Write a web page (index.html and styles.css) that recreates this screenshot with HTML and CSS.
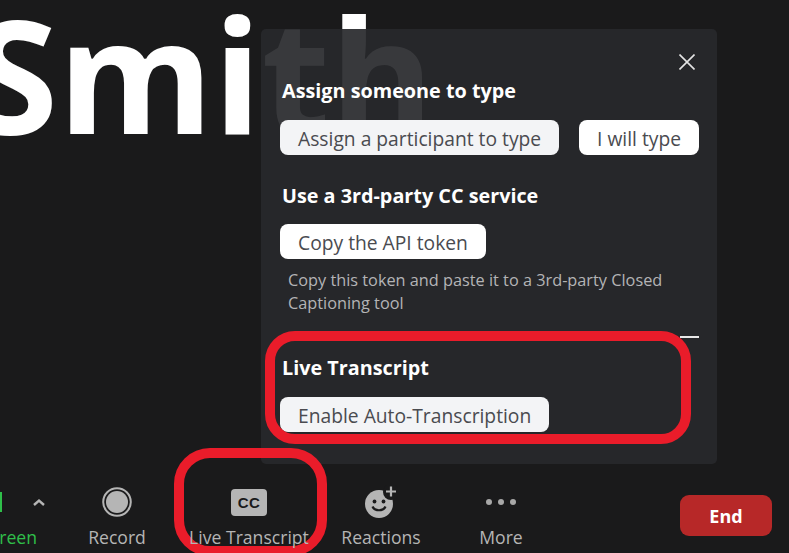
FILE: index.html

```html
<!DOCTYPE html>
<html lang="en">
<head>
    <meta charset="UTF-8">
    <meta name="viewport" content="width=device-width, initial-scale=1.0">
    <title>Live Transcript</title>
    <link rel="stylesheet" href="styles.css">
</head>
<body>
    <div class="stage">
        <div class="big-name">Smith</div>

        <div class="popup">
            <button class="close-btn" aria-label="Close">
                <svg width="16" height="16" viewBox="0 0 16 16"><path d="M0.5 0.5L15.5 15.5M15.5 0.5L0.5 15.5" stroke="#e4e4e4" stroke-width="1.6" fill="none"/></svg>
            </button>

            <h2>Assign someone to type</h2>
            <div class="btn-row">
                <button class="btn btn-grey">Assign a participant to type</button>
                <button class="btn">I will type</button>
            </div>

            <h2 class="second">Use a 3rd-party CC service</h2>
            <div class="btn-row">
                <button class="btn">Copy the API token</button>
            </div>
            <p class="help">Copy this token and paste it to a 3rd-party Closed Captioning tool</p>
            <div class="divider"></div>

            <h2 class="third">Live Transcript</h2>
            <div class="btn-row">
                <button class="btn btn-grey">Enable Auto-Transcription</button>
            </div>
        </div>

        <div class="ring ring-panel"></div>
        <div class="ring ring-tool"></div>

        <div class="toolbar">
            <div class="tool tool-share">
                <div class="tool-icon">
                    <span class="share-edge"></span>
                    <svg class="chevron" width="14" height="9" viewBox="0 0 14 9"><path d="M2 7L7 2.5L12 7" stroke="#b5b5b5" stroke-width="2.4" fill="none"/></svg>
                </div>
                <span class="tool-label label-green">Share Screen</span>
            </div>
            <div class="tool">
                <div class="tool-icon">
                    <svg width="30" height="30" viewBox="0 0 30 30"><circle cx="15" cy="15" r="13.8" stroke="#b5b5b5" stroke-width="2" fill="none"/><circle cx="15" cy="15" r="11" fill="#b5b5b5"/></svg>
                </div>
                <span class="tool-label">Record</span>
            </div>
            <div class="tool">
                <div class="tool-icon">
                    <span class="cc-icon">CC</span>
                </div>
                <span class="tool-label">Live Transcript</span>
            </div>
            <div class="tool">
                <div class="tool-icon">
                    <svg class="smile" width="34" height="34" viewBox="0 0 34 34">
                        <circle cx="15" cy="19" r="14" fill="#b5b5b5"/>
                        <circle cx="27" cy="7" r="8" fill="#1a1a1b"/>
                        <path d="M27 1.500V11.500M22 6.500H32" stroke="#b5b5b5" stroke-width="2.200" fill="none"/>
                        <circle cx="10.500" cy="16.500" r="1.900" fill="#1a1a1b"/>
                        <circle cx="19.500" cy="16.500" r="1.900" fill="#1a1a1b"/>
                        <path d="M8.500 21.500C10.500 26.500 19.500 26.500 21.500 21.500" stroke="#1a1a1b" stroke-width="2.200" fill="none"/>
                    </svg>
                </div>
                <span class="tool-label">Reactions</span>
            </div>
            <div class="tool tool-more">
                <div class="tool-icon">
                    <span class="dot"></span><span class="dot"></span><span class="dot"></span>
                </div>
                <span class="tool-label">More</span>
            </div>
            <button class="end-btn">End</button>
        </div>
    </div>
</body>
</html>
```

FILE: styles.css

```css
body {
    margin: 0;
    padding: 0;
    background-color: #1a1a1b;
    font-family: "Open Sans", "Noto Sans", sans-serif;
}

.stage {
    position: relative;
    width: 789px;
    height: 553px;
    overflow: hidden;
    display: flex;
    flex-direction: column;
    justify-content: flex-end;
}

.big-name {
    position: absolute;
    left: -29px;
    top: -36px;
    font-size: 158px;
    line-height: 218px;
    font-weight: 700;
    color: #fff;
    white-space: nowrap;
}

.popup {
    position: absolute;
    left: 261px;
    top: 29px;
    width: 456px;
    height: 435px;
    box-sizing: border-box;
    padding: 47px 18px 0 19px;
    background-color: rgba(39, 40, 43, 0.92);
    border-radius: 5px;
}

.popup h2 {
    margin: 0 0 14px 2px;
    font-size: 19.8px;
    line-height: 30px;
    font-weight: 700;
    color: #fff;
}

.popup h2.second {
    margin-top: 26px;
    margin-bottom: 13px;
}

.popup h2.third {
    margin-top: 15px;
    margin-bottom: 14px;
}

.close-btn {
    position: absolute;
    right: 22px;
    top: 25px;
    padding: 0;
    width: 16px;
    height: 16px;
    border: none;
    background: none;
    line-height: 0;
}

.btn-row {
    display: flex;
    justify-content: space-between;
}

.btn {
    height: 35px;
    padding: 2px 18px 0;
    border: none;
    border-radius: 8px;
    background-color: #fff;
    color: #4a4b50;
    font-family: inherit;
    font-size: 19.25px;
    line-height: 30px;
}

.btn-grey {
    background-color: #f3f4f6;
}

.help {
    margin: 10px 0 0 8px;
    width: 410px;
    font-size: 16.3px;
    line-height: 23px;
    color: #b4b4b6;
}

.divider {
    height: 2px;
    margin: 21px 0 0 400px;
    background-color: #e8e8e8;
}

.toolbar {
    position: relative;
    display: flex;
    align-items: flex-start;
    height: 80px;
    flex-shrink: 0;
}

.tool {
    width: 132px;
    flex-shrink: 0;
    padding-top: 7px;
    display: flex;
    flex-direction: column;
    align-items: center;
}

.tool-share {
    width: 51px;
    overflow: hidden;
    align-items: flex-end;
}

.tool-more {
    width: 108px;
}

.tool-icon {
    height: 44px;
    margin-bottom: 1px;
    display: flex;
    align-items: center;
    justify-content: center;
    gap: 6px;
}

.tool-label {
    font-size: 17.6px;
    line-height: 24px;
    color: #b5b5b5;
    white-space: nowrap;
}

.label-green {
    color: #2fbf4a;
    margin-right: 14px;
}

.tool-share .tool-icon {
    width: 51px;
    justify-content: flex-start;
    gap: 0;
}

.share-edge {
    width: 2px;
    height: 20px;
    background-color: #2fbf4a;
}

.chevron {
    margin-left: 30px;
}

.cc-icon {
    width: 36px;
    height: 27px;
    border-radius: 4px;
    background-color: #b5b5b5;
    color: #1a1a1b;
    font-family: "Liberation Sans", sans-serif;
    font-size: 15px;
    font-weight: 700;
    line-height: 27px;
    text-align: center;
    letter-spacing: 0.5px;
}

.dot {
    width: 6px;
    height: 6px;
    border-radius: 50%;
    background-color: #a8a8a8;
}

.end-btn {
    margin: 22px 17px 0 auto;
    width: 92px;
    height: 41px;
    border: none;
    border-radius: 9px;
    background-color: #b72828;
    color: #fff;
    font-family: inherit;
    font-size: 18px;
    font-weight: 700;
}

.ring {
    position: absolute;
    box-sizing: border-box;
    border: 10px solid #ea1c2a;
}

.ring-panel {
    left: 265px;
    top: 331px;
    width: 426px;
    height: 113px;
    border-radius: 30px;
}

.ring-tool {
    left: 174px;
    top: 448px;
    width: 153px;
    height: 108px;
    border-radius: 36px;
}
```
